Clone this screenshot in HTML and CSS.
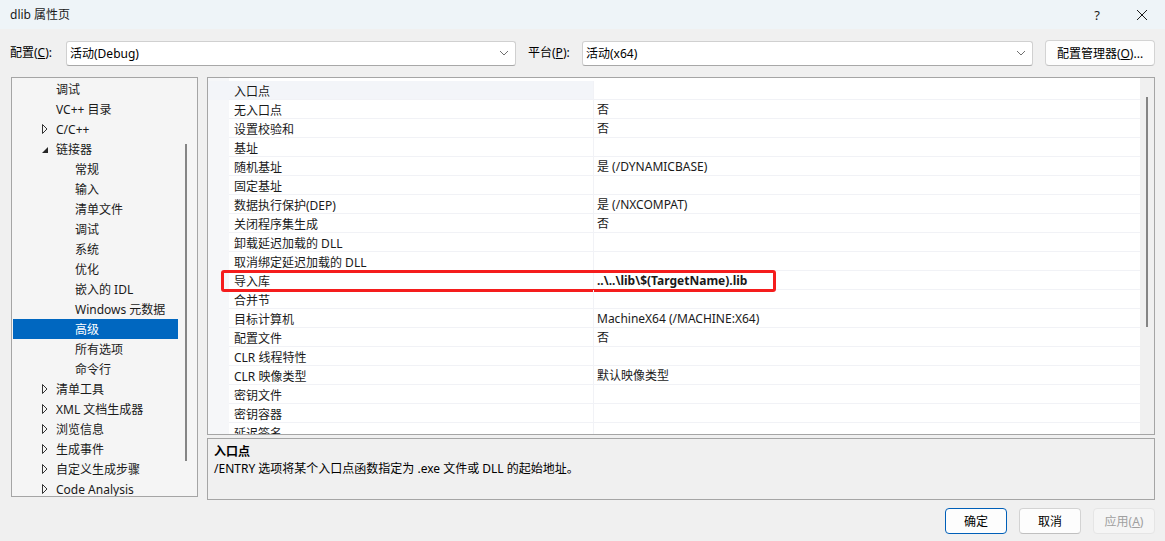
FILE: index.html
```html
<!DOCTYPE html>
<html lang="zh-CN">

<head>
    <meta charset="UTF-8">
    <title>dlib 属性页</title>
    <link rel="stylesheet" href="styles.css">
</head>

<body>
    <div class="window">
        <div class="titlebar">
            <span class="title">dlib 属性页</span>
            <div class="caption">
                <span class="caption-help">?</span>
                <svg class="caption-close" width="12" height="12" viewBox="0 0 12 12">
                    <path d="M1 1 L11 11 M11 1 L1 11" stroke="#1a1a1a" stroke-width="1" fill="none" />
                </svg>
            </div>
        </div>

        <div class="toolbar">
            <span class="tb-label tb-label-config">配置(<u>C</u>):</span>
            <div class="combo combo-config">
                <span>活动(Debug)</span>
                <svg class="chevron" width="10" height="6" viewBox="0 0 10 6">
                    <path d="M1 1 L5 5 L9 1" stroke="#707070" stroke-width="1" fill="none" />
                </svg>
            </div>
            <span class="tb-label tb-label-platform">平台(<u>P</u>):</span>
            <div class="combo combo-platform">
                <span>活动(x64)</span>
                <svg class="chevron" width="10" height="6" viewBox="0 0 10 6">
                    <path d="M1 1 L5 5 L9 1" stroke="#707070" stroke-width="1" fill="none" />
                </svg>
            </div>
            <button class="btn btn-manager">配置管理器(<u>O</u>)...</button>
        </div>

        <div class="main">
            <div class="tree">
                <ul class="tree-list">
                    <li class="tree-item lvl1">调试</li>
                    <li class="tree-item lvl1">VC++ 目录</li>
                    <li class="tree-item lvl1"><svg class="arrow" width="6" height="10" viewBox="0 0 6 10"><path d="M0.5 0.5 L5 5 L0.5 9.5 Z" stroke="#333" stroke-width="1" fill="none" /></svg>C/C++</li>
                    <li class="tree-item lvl1"><svg class="arrow" width="6" height="10" viewBox="0 0 6 10"><path d="M6 3 L6 9 L0 9 Z" fill="#262626" /></svg>链接器</li>
                    <li class="tree-item lvl2">常规</li>
                    <li class="tree-item lvl2">输入</li>
                    <li class="tree-item lvl2">清单文件</li>
                    <li class="tree-item lvl2">调试</li>
                    <li class="tree-item lvl2">系统</li>
                    <li class="tree-item lvl2">优化</li>
                    <li class="tree-item lvl2">嵌入的 IDL</li>
                    <li class="tree-item lvl2">Windows 元数据</li>
                    <li class="tree-item lvl2 selected">高级</li>
                    <li class="tree-item lvl2">所有选项</li>
                    <li class="tree-item lvl2">命令行</li>
                    <li class="tree-item lvl1"><svg class="arrow" width="6" height="10" viewBox="0 0 6 10"><path d="M0.5 0.5 L5 5 L0.5 9.5 Z" stroke="#333" stroke-width="1" fill="none" /></svg>清单工具</li>
                    <li class="tree-item lvl1"><svg class="arrow" width="6" height="10" viewBox="0 0 6 10"><path d="M0.5 0.5 L5 5 L0.5 9.5 Z" stroke="#333" stroke-width="1" fill="none" /></svg>XML 文档生成器</li>
                    <li class="tree-item lvl1"><svg class="arrow" width="6" height="10" viewBox="0 0 6 10"><path d="M0.5 0.5 L5 5 L0.5 9.5 Z" stroke="#333" stroke-width="1" fill="none" /></svg>浏览信息</li>
                    <li class="tree-item lvl1"><svg class="arrow" width="6" height="10" viewBox="0 0 6 10"><path d="M0.5 0.5 L5 5 L0.5 9.5 Z" stroke="#333" stroke-width="1" fill="none" /></svg>生成事件</li>
                    <li class="tree-item lvl1"><svg class="arrow" width="6" height="10" viewBox="0 0 6 10"><path d="M0.5 0.5 L5 5 L0.5 9.5 Z" stroke="#333" stroke-width="1" fill="none" /></svg>自定义生成步骤</li>
                    <li class="tree-item lvl1"><svg class="arrow" width="6" height="10" viewBox="0 0 6 10"><path d="M0.5 0.5 L5 5 L0.5 9.5 Z" stroke="#333" stroke-width="1" fill="none" /></svg>Code Analysis</li>
                </ul>
                <div class="tree-scroll">
                    <div class="tree-thumb"></div>
                </div>
            </div>

            <div class="right">
                <div class="grid">
                    <div class="grid-rows">
                        <div class="row current"><div class="gutter"></div><div class="name">入口点</div><div class="value"></div></div>
                        <div class="row"><div class="gutter"></div><div class="name">无入口点</div><div class="value">否</div></div>
                        <div class="row"><div class="gutter"></div><div class="name">设置校验和</div><div class="value">否</div></div>
                        <div class="row"><div class="gutter"></div><div class="name">基址</div><div class="value"></div></div>
                        <div class="row"><div class="gutter"></div><div class="name">随机基址</div><div class="value">是 (/DYNAMICBASE)</div></div>
                        <div class="row"><div class="gutter"></div><div class="name">固定基址</div><div class="value"></div></div>
                        <div class="row"><div class="gutter"></div><div class="name">数据执行保护(DEP)</div><div class="value">是 (/NXCOMPAT)</div></div>
                        <div class="row"><div class="gutter"></div><div class="name">关闭程序集生成</div><div class="value">否</div></div>
                        <div class="row"><div class="gutter"></div><div class="name">卸载延迟加载的 DLL</div><div class="value"></div></div>
                        <div class="row"><div class="gutter"></div><div class="name">取消绑定延迟加载的 DLL</div><div class="value"></div></div>
                        <div class="row marked"><div class="gutter"></div><div class="name">导入库</div><div class="value bold">..\..\lib\$(TargetName).lib</div><span class="red-box"></span></div>
                        <div class="row"><div class="gutter"></div><div class="name">合并节</div><div class="value"></div></div>
                        <div class="row"><div class="gutter"></div><div class="name">目标计算机</div><div class="value">MachineX64 (/MACHINE:X64)</div></div>
                        <div class="row"><div class="gutter"></div><div class="name">配置文件</div><div class="value">否</div></div>
                        <div class="row"><div class="gutter"></div><div class="name">CLR 线程特性</div><div class="value"></div></div>
                        <div class="row"><div class="gutter"></div><div class="name">CLR 映像类型</div><div class="value">默认映像类型</div></div>
                        <div class="row"><div class="gutter"></div><div class="name">密钥文件</div><div class="value"></div></div>
                        <div class="row"><div class="gutter"></div><div class="name">密钥容器</div><div class="value"></div></div>
                        <div class="row"><div class="gutter"></div><div class="name">延迟签名</div><div class="value"></div></div>
                    </div>
                    <div class="grid-scroll">
                        <div class="grid-thumb"></div>
                    </div>
                </div>

                <div class="desc">
                    <div class="desc-title">入口点</div>
                    <div class="desc-text">/ENTRY 选项将某个入口点函数指定为 .exe 文件或 DLL 的起始地址。</div>
                </div>
            </div>
        </div>

        <div class="footer">
            <button class="btn btn-ok">确定</button>
            <button class="btn">取消</button>
            <button class="btn btn-disabled">应用(<u>A</u>)</button>
        </div>
    </div>
</body>

</html>
```

FILE: styles.css
```css
* {
    margin: 0;
    padding: 0;
    box-sizing: border-box;
}

body {
    font-family: "Noto Sans", "Noto Sans CJK SC", sans-serif;
    font-size: 12px;
    color: #000;
    background: #f0f0f0;
}

.window {
    width: 1165px;
    height: 541px;
    display: flex;
    flex-direction: column;
    overflow: hidden;
}

/* title bar */
.titlebar {
    height: 29px;
    background: #eef4f8;
    display: flex;
    align-items: center;
    justify-content: space-between;
    padding-left: 10px;
    padding-right: 17px;
}

.title {
    line-height: 16px;
    color: #1a1a1a;
}

.caption {
    display: flex;
    align-items: center;
    gap: 36px;
}

.caption-help {
    font-size: 13px;
    color: #1a1a1a;
}

.caption-close {
    display: block;
}

/* configuration toolbar */
.toolbar {
    height: 26px;
    margin-top: 11px;
    padding-left: 10px;
    display: flex;
    align-items: center;
}

.tb-label {
    line-height: 16px;
}

.tb-label-config {
    width: 56px;
}

.tb-label-platform {
    width: 54px;
    margin-left: 12px;
}

.combo {
    height: 25px;
    background: #fff;
    border: 1px solid #d0d0d0;
    border-bottom-color: #a8a8a8;
    border-radius: 3px;
    display: flex;
    align-items: center;
    justify-content: space-between;
    padding: 0 6px 0 3px;
}

.combo-config {
    width: 450px;
}

.combo-platform {
    width: 451px;
}

.chevron {
    display: block;
}

.btn {
    font-family: inherit;
    font-size: 12px;
    color: #000;
    background: #fdfdfd;
    border: 1px solid #d3d3d3;
    border-bottom-color: #c0c0c0;
    border-radius: 4px;
    height: 26px;
    width: 62px;
}

.btn-manager {
    width: 110px;
    margin-left: 12px;
}

/* main area */
.main {
    display: flex;
    margin-top: 11px;
    padding-left: 11px;
    gap: 9px;
}

.tree {
    width: 187px;
    height: 420px;
    border: 1px solid #a5a5a5;
    background: #f5f5f5;
    display: flex;
    overflow: hidden;
}

.tree-list {
    list-style: none;
    width: 166px;
    padding-top: 1px;
    padding-left: 1px;
}

.tree-item {
    height: 20px;
    line-height: 18px;
    padding-top: 2px;
    white-space: nowrap;
    position: relative;
    color: #1a1a1a;
}

.tree-item.lvl1 {
    padding-left: 43px;
}

.tree-item.lvl2 {
    padding-left: 62px;
}

.tree-item.selected {
    background: #0067c0;
    color: #fff;
}

.arrow {
    position: absolute;
    left: 29px;
    top: 5px;
    display: block;
}

.tree-scroll {
    flex: 1;
    position: relative;
}

.tree-thumb {
    position: absolute;
    left: 7px;
    top: 66px;
    width: 2px;
    height: 317px;
    background: #858585;
}

/* property grid */
.right {
    width: 948px;
    display: flex;
    flex-direction: column;
    gap: 3px;
}

.grid {
    height: 358px;
    border: 1px solid #a5a5a5;
    background: #fff;
    display: flex;
    overflow: hidden;
}

.grid-rows {
    flex: 1;
    padding-top: 3px;
    background: linear-gradient(90deg, #f6f7f9 21px, #fff 21px);
    overflow: hidden;
}

.row {
    display: flex;
    height: 19px;
    position: relative;
}

.gutter {
    width: 21px;
    flex-shrink: 0;
}

.name {
    width: 365px;
    flex-shrink: 0;
    padding-left: 5px;
    line-height: 17px;
    padding-top: 2px;
    border-bottom: 1px solid #f1f2f6;
    border-right: 1px solid #f1f2f6;
    white-space: nowrap;
    color: #1a1a1a;
}

.value {
    flex: 1;
    padding-left: 3px;
    line-height: 17px;
    padding-top: 1px;
    border-bottom: 1px solid #f1f2f6;
    white-space: nowrap;
    color: #1a1a1a;
}

.value.bold {
    font-weight: 700;
}

.row.current .gutter,
.row.current .name {
    background: #f3f5f9;
}

.red-box {
    position: absolute;
    left: 13px;
    top: -1px;
    width: 555px;
    height: 22px;
    border: 3px solid #f51d1d;
    border-radius: 3px;
}

.grid-scroll {
    width: 14px;
    background: #f0f0f0;
    position: relative;
}

.grid-thumb {
    position: absolute;
    left: 6px;
    top: 19px;
    width: 2px;
    height: 230px;
    background: #858585;
}

/* description */
.desc {
    height: 62px;
    border: 1px solid #a5a5a5;
    padding: 4px 6px;
}

.desc-title {
    font-weight: 700;
    line-height: 17px;
}

.desc-text {
    line-height: 17px;
}

/* footer buttons */
.footer {
    display: flex;
    justify-content: flex-end;
    gap: 12px;
    margin-top: 8px;
    padding-right: 10px;
}

.btn-ok {
    border: 1px solid #005fb8;
}

.btn-disabled {
    background: #f5f5f5;
    border-color: #e5e5e5;
    color: #a0a0a0;
}
```
